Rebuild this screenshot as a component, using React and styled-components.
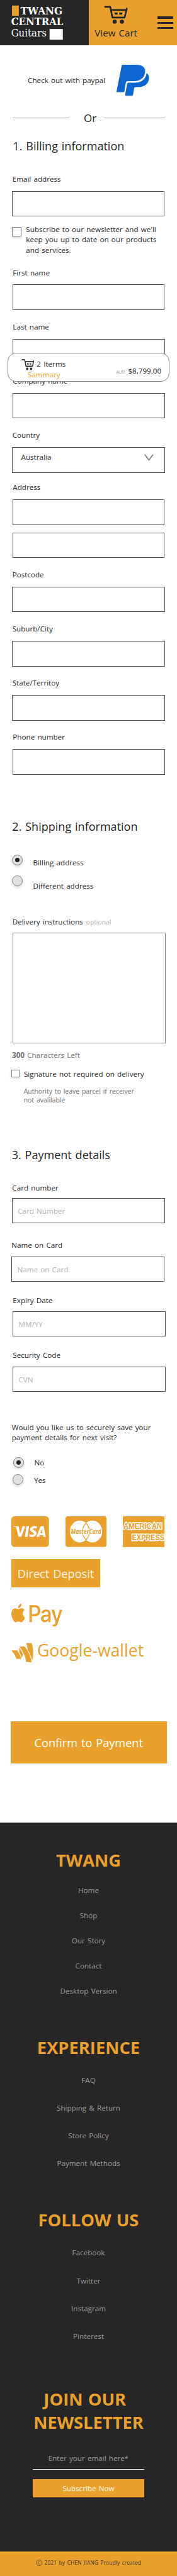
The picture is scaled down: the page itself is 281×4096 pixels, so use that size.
import React from "react";
import styled, { createGlobalStyle } from "styled-components";
import { FaApplePay, FaCcVisa, FaGoogleWallet } from "react-icons/fa";

const u = (n) => `${Math.round(n * 678.5) / 1000}px`;

const ink = "#262626";
const amber = "#eaa02d";
const line = "#505050";
const grey = "#707070";
const pale = "#b0b0b0";

const GlobalStyle = createGlobalStyle`
  *, *::before, *::after { box-sizing: border-box; }
  body {
    margin: 0;
    background: #fff;
    color: ${ink};
    font-family: "Open Sans", "Noto Sans", sans-serif;
    font-size: ${u(17.2)};
    line-height: ${u(24)};
    word-spacing: 0.1em;
    overflow: hidden;
  }
  svg { display: block; flex: none; }
`;

const Page = styled.div`
  position: relative;
  width: 281px;
  height: 4096px;
  overflow: hidden;
  display: flex;
  flex-direction: column;
`;

/* ---------- header ---------- */
const Header = styled.header`
  flex: none;
  display: flex;
  height: ${u(106)};
`;
const Brand = styled.div`
  width: 50%;
  background: ${ink};
`;
const HeaderActions = styled.div`
  flex: 1;
  display: flex;
  justify-content: space-between;
  background: ${amber};
  padding: ${u(13)} ${u(9)} 0 ${u(14.5)};
`;
const CartLink = styled.a`
  display: flex;
  flex-direction: column;
  font-size: ${u(22.3)};
  line-height: ${u(32)};
  white-space: nowrap;
  svg { margin: 0 0 ${u(5.5)} ${u(21)}; }
`;
const Burger = styled.div`
  display: flex;
  flex-direction: column;
  gap: ${u(7)};
  padding-top: ${u(26)};
`;
const BurgerBar = styled.span`
  width: ${u(37)};
  height: ${u(5)};
  background: ${ink};
`;

/* ---------- form ---------- */
const Main = styled.main`
  flex: none;
  display: flex;
  flex-direction: column;
  align-items: flex-start;
  height: ${u(4165)};
`;
const PaypalRow = styled.div`
  display: flex;
  align-items: center;
  gap: ${u(25)};
  height: ${u(73)};
  margin: ${u(46)} 0 0 ${u(65)};
  span { width: ${u(183)}; white-space: nowrap; padding-top: ${u(2)}; }
`;
const OrRow = styled.div`
  display: flex;
  align-items: center;
  height: ${u(36)};
  width: ${u(356)};
  margin: ${u(33.7)} 0 0 ${u(29.5)};
  font-size: ${u(25)};
`;
const Rule = styled.i`
  width: ${({ $w }) => u($w)};
  height: 1px;
  margin-bottom: ${u(2)};
  background: #a9a9a9;
`;
const OrText = styled.span`
  flex: 1;
  text-align: center;
  padding-left: ${u(17)};
`;
const Title = styled.h2`
  margin: ${({ $top }) => u($top)} 0 0 ${({ $x }) => u($x)};
  height: ${u(36)};
  line-height: ${u(36)};
  font-size: ${u(26.6)};
  font-weight: 400;
  white-space: nowrap;
`;
const FieldWrap = styled.div`
  display: flex;
  flex-direction: column;
  flex: none;
  margin: ${({ $top }) => u($top)} 0 0 ${({ $x }) => u($x)};
  width: ${({ $w }) => u($w)};
`;
const Label = styled.label`
  height: ${u(24)};
  white-space: nowrap;
  padding-left: ${({ $x = 1 }) => u($x)};
  margin-bottom: ${({ $gap }) => u($gap)};
`;
const Box = styled.div`
  display: flex;
  align-items: center;
  justify-content: space-between;
  height: ${({ $h = 60 }) => u($h)};
  border: 1px solid ${({ $soft }) => ($soft ? "#8a8a8a" : line)};
  background: #fff;
  color: ${({ $hint }) => ($hint ? pale : ink)};
  padding: ${({ $hint }) => ($hint ? `${u(3)} 0 0 ${u(12)}` : `0 ${u(25)} ${u(11)} ${u(20)}`)};
`;
const Choice = styled.div`
  display: flex;
  flex: none;
  align-items: flex-start;
  margin: ${({ $top }) => u($top)} 0 0 ${({ $x = 28 }) => u($x)};
  height: ${({ $h = 25 }) => u($h)};
`;
const Check = styled.span`
  flex: none;
  width: ${({ $s }) => u($s)};
  height: ${({ $s }) => u($s)};
  margin: ${({ $drop }) => u($drop)} ${u(11)} 0 0;
  border: 1px solid #868686;
  background: #fff;
  box-shadow: 0 2px 4px rgba(0, 0, 0, 0.16);
`;
const Radio = styled.span`
  flex: none;
  display: grid;
  place-items: center;
  width: ${u(25)};
  height: ${u(25)};
  margin-right: ${u(24.5)};
  border: 1px solid #868686;
  border-radius: 50%;
  background: #e0e0e0;
  box-shadow: 0 2px 4px rgba(0, 0, 0, 0.16);
  &::after {
    content: "";
    width: ${u(10)};
    height: ${u(10)};
    border-radius: 50%;
    background: ${({ $on }) => ($on ? ink : "transparent")};
  }
`;
const ChoiceText = styled.span`
  white-space: nowrap;
  margin-top: ${({ $drop = 0 }) => u($drop)};
  line-height: ${({ $lh = 24 }) => u($lh)};
`;
const Optional = styled.span`
  color: ${pale};
  font-size: ${u(15.2)};
  margin-left: ${u(1)};
`;
const Note = styled.p`
  margin: ${({ $top }) => u($top)} 0 0 ${({ $x }) => u($x)};
  color: ${({ $muted }) => ($muted ? grey : ink)};
  font-size: ${({ $size = 17.2 }) => u($size)};
  line-height: ${({ $lh = 24 }) => u($lh)};
  white-space: nowrap;
`;

/* ---------- cart summary ---------- */
const Summary = styled.aside`
  position: absolute;
  top: ${u(827)};
  left: ${u(18)};
  width: ${u(378)};
  height: ${u(68)};
  display: flex;
  justify-content: space-between;
  padding: ${u(12)} ${u(17)} 0 ${u(30)};
  border: 1px solid #8a8a8a;
  border-radius: ${u(20)};
  background: #fff;
`;
const SummaryItems = styled.div`
  display: flex;
  flex-direction: column;
`;
const ItemCount = styled.div`
  display: flex;
  gap: ${u(6.5)};
  height: ${u(27)};
  padding-top: ${u(1)};
  white-space: nowrap;
  svg { width: ${u(30)}; height: ${u(26)}; }
`;
const SummaryLink = styled.a`
  color: ${amber};
  margin-left: ${u(15)};
  line-height: ${u(22)};
`;
const SummaryTotal = styled.div`
  display: flex;
  align-items: baseline;
  gap: ${u(8)};
  padding-top: ${u(17)};
`;
const Currency = styled.small`
  font-size: ${u(9.6)};
  color: #999;
`;

/* ---------- payment methods ---------- */
const CardLogos = styled.div`
  display: flex;
  flex: none;
  gap: ${u(38)};
  margin: ${u(73)} 0 0 ${u(27)};
  height: ${u(72)};
`;
const VisaCard = styled.span`
  width: ${u(88)};
  height: ${u(72)};
  color: ${amber};
  svg { width: 100%; height: 100%; }
`;
const Deposit = styled.div`
  flex: none;
  display: flex;
  align-items: center;
  justify-content: center;
  margin: ${u(28)} 0 0 ${u(27)};
  width: ${u(207)};
  height: ${u(67)};
  padding-top: ${u(3)};
  background: ${amber};
  color: #fff6e3;
  font-size: ${u(26.8)};
  white-space: nowrap;
`;
const Wallet = styled.div`
  flex: none;
  display: flex;
  align-items: center;
  gap: ${u(8)};
  height: ${({ $h }) => u($h)};
  margin: ${({ $top }) => u($top)} 0 0 ${u(27)};
  color: ${amber};
  font-size: ${u(39.2)};
  line-height: ${u(46)};
  white-space: nowrap;
  svg { width: ${({ $w }) => u($w)}; height: 100%; }
  span { margin-top: ${u(-8)}; }
`;
const Confirm = styled.button`
  flex: none;
  margin: ${u(138)} 0 0 ${u(25)};
  width: ${u(365)};
  height: ${u(98)};
  padding: ${u(3)} 0 0;
  border: 0;
  background: ${amber};
  color: #fffdf5;
  font: inherit;
  font-size: ${u(26.8)};
  word-spacing: inherit;
`;

/* ---------- footer ---------- */
const Footer = styled.footer`
  flex: none;
  display: flex;
  flex-direction: column;
  align-items: center;
  height: ${u(1708)};
  padding-top: ${u(60.5)};
  background: ${ink};
  color: #9b9b9b;
`;
const FooterTitle = styled.h3`
  margin: ${({ $top = 0 }) => u($top)} 0 0;
  color: ${amber};
  font-size: ${u(40.3)};
  font-weight: 700;
  line-height: ${({ $lh = 56 }) => u($lh)};
  text-align: center;
  white-space: nowrap;
  span { display: block; }
  span:first-child:not(:last-child) { padding-right: ${u(17)}; }
`;
const LinkList = styled.nav`
  display: flex;
  flex-direction: column;
  align-items: center;
  gap: ${({ $gap }) => u($gap)};
  margin-top: ${({ $top }) => u($top)};
`;
const EmailInput = styled.div`
  width: ${u(262)};
  height: ${u(37.6)};
  margin-top: ${u(45.4)};
  border-bottom: 1px solid #efe6ef;
  text-align: center;
`;
const Subscribe = styled.button`
  width: ${u(262)};
  height: ${u(43)};
  margin-top: ${u(22)};
  padding: ${u(3)} 0 0;
  border: 0;
  background: ${amber};
  color: #fffdf5;
  font: inherit;
  font-weight: 500;
  word-spacing: inherit;
`;
const Copyright = styled.div`
  flex: 1;
  display: flex;
  align-items: center;
  justify-content: center;
  gap: ${u(5)};
  background: ${amber};
  color: #3b3424;
  font-size: ${u(12.7)};
  padding-bottom: ${u(4)};
  white-space: nowrap;
`;

const CartIcon = () => (
  <svg width={u(56)} height={u(43)} viewBox="727 38 169 129" preserveAspectRatio="none">
    <path d="M735 46H771L787 121H873L888 59M780 68H886" fill="none" stroke={ink} strokeWidth="12" strokeLinecap="round" strokeLinejoin="round" />
    <path d="M800 87h24v14h-20zM835 87h24l-4 14h-20z" fill={ink} />
    <circle cx="803" cy="151" r="14.5" fill={ink} />
    <circle cx="854" cy="151" r="14.5" fill={ink} />
  </svg>
);

const Logo = () => (
  <svg width={u(207)} height={u(106)} viewBox="0 0 207 106" fontFamily="'DejaVu Serif', serif" wordSpacing="0" fill="#fff">
    <rect x="28" y="13" width="16" height="24" fill={amber} />
    <text x="48" y="34" fontSize="25.5" fontWeight="700" textLength="98" lengthAdjust="spacingAndGlyphs">TWANG</text>
    <text x="26" y="59" fontSize="25.5" fontWeight="700" textLength="122" lengthAdjust="spacingAndGlyphs">CENTRAL</text>
    <text x="26" y="86" fontSize="25.5" textLength="83" lengthAdjust="spacingAndGlyphs">Guitars</text>
    <rect x="116" y="68" width="31" height="25" />
  </svg>
);

const PaypalIcon = () => (
  <svg width={u(76)} height={u(73)} viewBox="819 456 228 218" fill="#0d66d0">
    <path d="M855 462q1-6 8-6h95c40 0 62 18 62 44c0 44-32 71-78 71h-42q-14 0-16 12l-10 60q-1 5-5 5h-46q-5 0-4-5z" />
    <path d="M1030 514c10 6 17 18 17 32c0 38-28 66-72 66h-22q-9 0-10 7l-8 47q-1 7-8 7h-44q-5 0-4-5l14-78q1-8 8-8h44c48 0 80-26 85-68z" />
  </svg>
);

const MasterCard = () => (
  <svg width={u(96)} height={u(72)} viewBox="0 0 96 72">
    <rect width="96" height="72" rx="6" fill={amber} />
    <ellipse cx="33.2" cy="35.6" rx="22.9" ry="25.5" fill="#fff" />
    <ellipse cx="62.8" cy="35.6" rx="22.9" ry="25.5" fill="#fff" />
    <path d="M48 16.2A22.9 25.5 0 0 0 48 55A22.9 25.5 0 0 0 48 16.2z" fill="none" stroke={amber} strokeWidth="1.8" />
    <text x="12.5" y="41.7" fontFamily="'Open Sans', sans-serif" fontSize="16.3" fontWeight="700" fontStyle="italic" fill={amber} stroke="#fff" strokeWidth="2.4" paintOrder="stroke" textLength="71" lengthAdjust="spacingAndGlyphs">MasterCard</text>
  </svg>
);

const Amex = () => (
  <svg width={u(98)} height={u(72)} viewBox="0 0 98 72" fontFamily="'Liberation Sans', sans-serif" fontWeight="700" fontSize="19.6" fill={amber} stroke="#fff" strokeWidth="4.6" paintOrder="stroke">
    <rect width="98" height="72" stroke="none" />
    <text x="1.5" y="29.6" textLength="90" lengthAdjust="spacingAndGlyphs">AMERICAN</text>
    <text x="21.5" y="56" textLength="76" lengthAdjust="spacingAndGlyphs">EXPRESS</text>
  </svg>
);

const Field = ({ label, top = 27.4, x = 28, w = 358, lx, gap = 15.6, h, hint, children }) => (
  <FieldWrap $top={top} $x={x} $w={w}>
    <Label $gap={gap} $x={lx}>{label}</Label>
    <Box $h={h} $hint={!!hint}>{hint || children}</Box>
  </FieldWrap>
);

export default function App() {
  return (
    <Page>
      <GlobalStyle />
      <Header>
        <Brand><Logo /></Brand>
        <HeaderActions>
          <CartLink>
            <CartIcon />
            View Cart
          </CartLink>
          <Burger><BurgerBar /><BurgerBar /><BurgerBar /></Burger>
        </HeaderActions>
      </Header>

      <Main>
        <PaypalRow><span>Check out with paypal</span><PaypalIcon /></PaypalRow>
        <OrRow><Rule $w={133} /><OrText>Or</OrText><Rule $w={143} /></OrRow>

        <Title $top={29} $x={30}>1. Billing information</Title>
        <Field label="Email address" top={48.5} w={357} />
        <Choice $top={18.2} $h={73}>
          <Check $s={22} $drop={6} />
          <ChoiceText $lh={24.3}>
            Subscribe to our newsletter and we'll<br />keep you up to date on our products<br />and services.
          </ChoiceText>
        </Choice>
        <Field label="First name" top={28.4} x={29} w={356} />
        <Field label="Last name" x={29} w={357} />
        <Field label="Company name" x={29} w={357} />
        <Field label="Country">
          Australia
          <svg width={u(22)} height={u(17)} viewBox="0 0 22 17">
            <path d="M2 2L11 14L20 2" fill="none" stroke="#909090" strokeWidth="3" strokeLinecap="round" />
          </svg>
        </Field>
        <Field label="Address" top={23.4} x={29} w={356} />
        <FieldWrap $top={17} $x={29} $w={356}><Box /></FieldWrap>
        <Field label="Postcode" />
        <Field label="Suburb/City" />
        <Field label="State/Territoy" />
        <Field label="Phone number" x={29} w={357} />

        <Title $top={103.9} $x={28.5}>2. Shipping information</Title>
        <Choice $top={47.1}><Radio $on /><ChoiceText $drop={7.4}>Billing address</ChoiceText></Choice>
        <Choice $top={24}><Radio /><ChoiceText $drop={12.8}>Different address</ChoiceText></Choice>
        <FieldWrap $top={72.4} $x={29} $w={358}>
          <Label $gap={13.6} $x={-1}>Delivery instructions <Optional>optional</Optional></Label>
          <Box $h={259} $soft />
        </FieldWrap>
        <Note $top={16.1} $x={28} $muted><b>300</b> Characters Left</Note>
        <Choice $top={20.3} $x={27} $h={24}>
          <Check $s={18} $drop={1.6} />
          <ChoiceText>Signature not required on delivery</ChoiceText>
        </Choice>
        <Note $top={16.5} $x={55.5} $size={15.4} $lh={21} $muted>
          Authority to leave parcel if receiver<br />not avalilable
        </Note>

        <Title $top={99.4} $x={27.5}>3. Payment details</Title>
        <Field label="Card number" top={49.1} lx={0.5} gap={11.6} h={59} hint="Card Number" />
        <Field label="Name on Card" top={39.4} x={27} lx={0} gap={13.6} h={59} hint="Name on Card" />
        <Field label="Expiry Date" top={32.7} x={30} lx={0} gap={13.3} h={59} hint="MM/YY" />
        <Field label="Security Code" top={32.7} x={30} lx={0} gap={13.3} h={59} hint="CVN" />
        <Note $top={71.9} $x={27.5}>Would you like us to securely save your<br />payment details for next visit?</Note>
        <Choice $top={34.1} $x={31}><Radio $on /><ChoiceText $drop={1.4}>No</ChoiceText></Choice>
        <Choice $top={15} $x={30}><Radio /><ChoiceText $drop={2.4}>Yes</ChoiceText></Choice>

        <CardLogos>
          <VisaCard><FaCcVisa viewBox="0 32 576 448" preserveAspectRatio="none" /></VisaCard>
          <MasterCard />
          <Amex />
        </CardLogos>
        <Deposit>Direct Deposit</Deposit>
        <Wallet $top={38} $h={54} $w={119}>
          <FaApplePay viewBox="0 124 640 264" preserveAspectRatio="none" />
        </Wallet>
        <Wallet $top={37} $h={47} $w={52}>
          <FaGoogleWallet viewBox="4 30 440 452" preserveAspectRatio="none" stroke="#fff" strokeWidth="8" />
          <span>Google-wallet</span>
        </Wallet>
        <Confirm>Confirm to Payment</Confirm>
      </Main>

      <Footer>
        <FooterTitle>TWANG</FooterTitle>
        <LinkList $top={30.9} $gap={35}>
          <a>Home</a><a>Shop</a><a>Our Story</a><a>Contact</a><a>Desktop Version</a>
        </LinkList>
        <FooterTitle $top={93.3}>EXPERIENCE</FooterTitle>
        <LinkList $top={36.2} $gap={40.9}>
          <a>FAQ</a><a>Shipping &amp; Return</a><a>Store Policy</a><a>Payment Methods</a>
        </LinkList>
        <FooterTitle $top={92.7}>FOLLOW US</FooterTitle>
        <LinkList $top={37.1} $gap={41}>
          <a>Facebook</a><a>Twitter</a><a>Instagram</a><a>Pinterest</a>
        </LinkList>
        <FooterTitle $top={107.6} $lh={55}><span>JOIN OUR</span><span>NEWSLETTER</span></FooterTitle>
        <EmailInput>Enter your email here*</EmailInput>
        <Subscribe>Subscribe Now</Subscribe>
      </Footer>
      <Copyright>
        <svg width={u(15)} height={u(15)} viewBox="0 0 15 15" fill="none" stroke="#3b3424">
          <circle cx="7.5" cy="7.5" r="6.8" />
          <path d="M10 5.6A3 3 0 1 0 10 9.4" />
        </svg>
        2021 by CHEN JIANG Proudly created
      </Copyright>

      <Summary>
        <SummaryItems>
          <ItemCount><CartIcon />2 Iterms</ItemCount>
          <SummaryLink>Sammary</SummaryLink>
        </SummaryItems>
        <SummaryTotal><Currency>AUD</Currency>$8,799.00</SummaryTotal>
      </Summary>
    </Page>
  );
}
